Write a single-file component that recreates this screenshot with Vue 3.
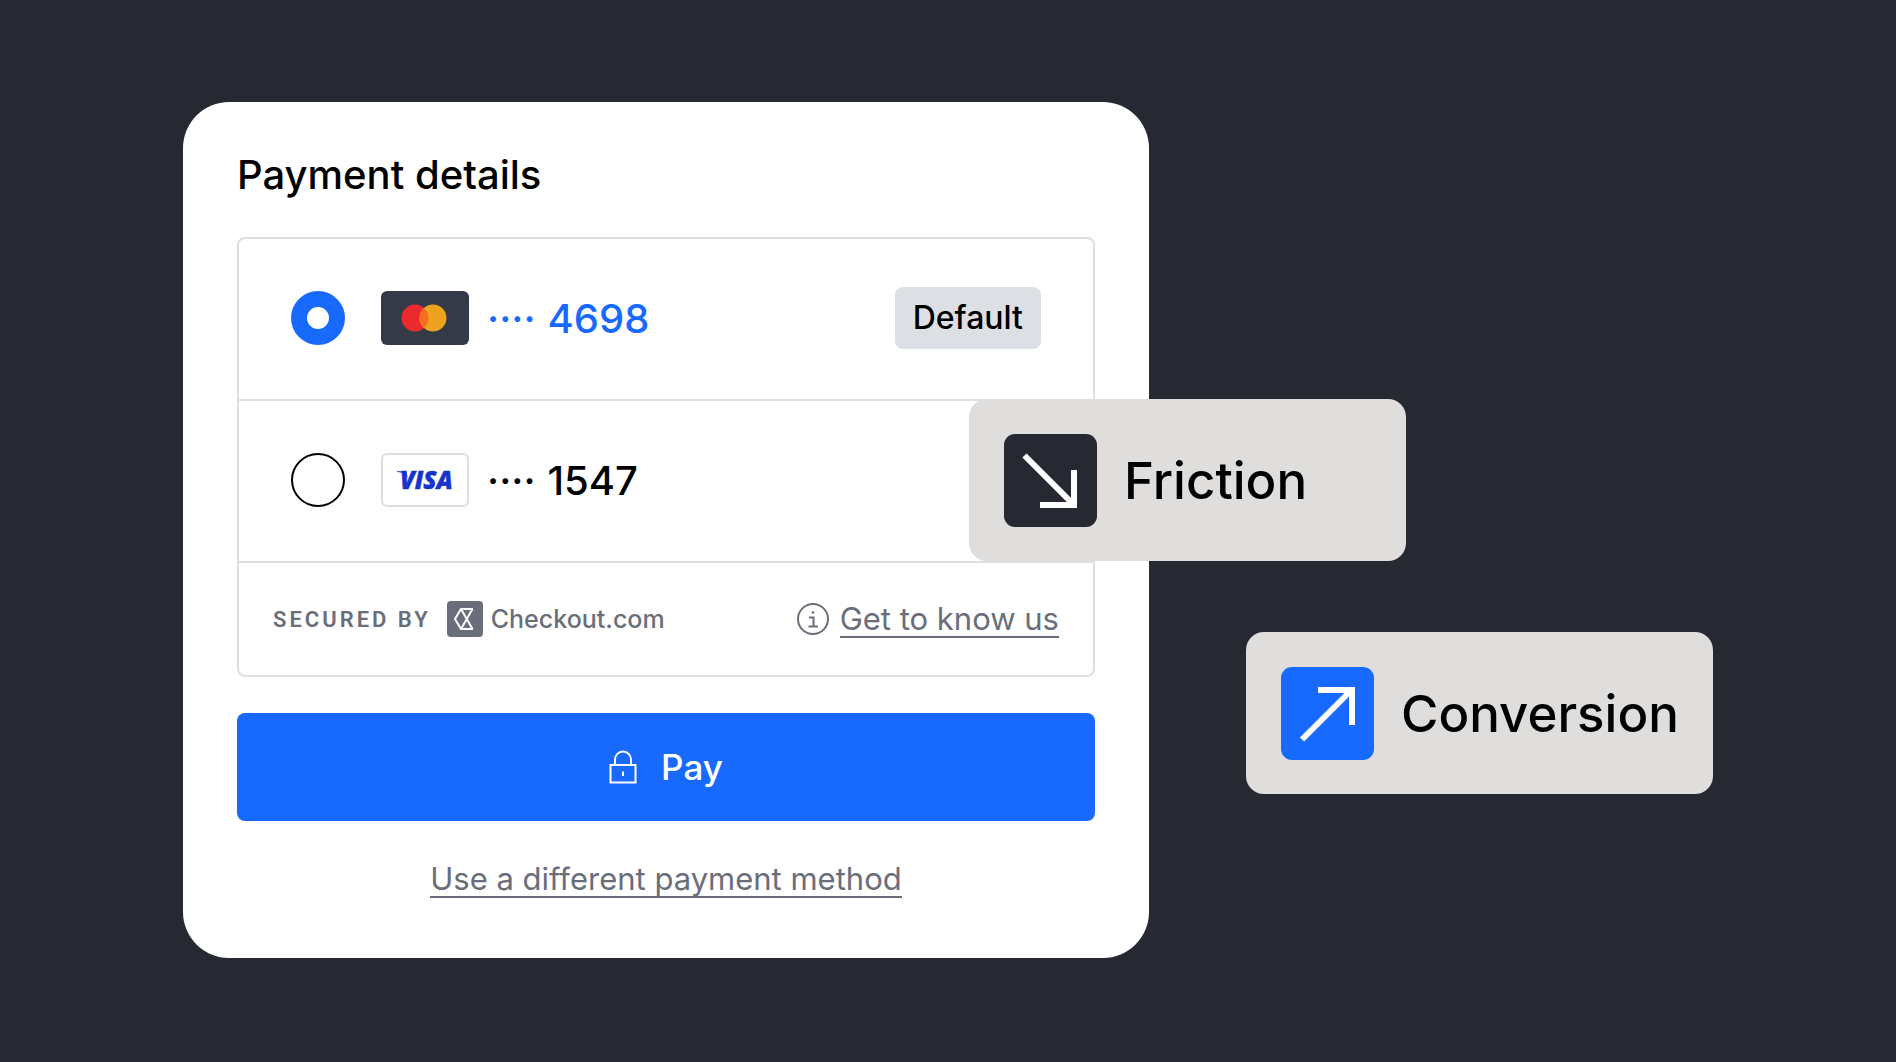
<script setup>
	import { ref } from 'vue';

	const selected = ref('4698');
	const cards = [
		{ last4: '4698', brand: 'mastercard', isDefault: true },
		{ last4: '1547', brand: 'visa', isDefault: false },
	];
</script>

<template>
	<main class="stage">
		<section class="card">
			<h1>Payment details</h1>

			<!-- saved cards -->
			<div class="methods">
				<label
					v-for="card in cards"
					:key="card.last4"
					class="method"
					:class="{ active: selected === card.last4 }"
				>
					<input type="radio" name="card" :value="card.last4" v-model="selected" />
					<svg v-if="card.brand === 'mastercard'" class="brand" viewBox="0 0 88 54">
						<rect width="88" height="54" rx="6" fill="#353a48" />
						<circle cx="34" cy="27" r="13.5" fill="#eb2a2e" />
						<circle cx="52" cy="27" r="13.5" fill="#eda31d" />
						<path d="M43 16.9a13.5 13.5 0 0 1 0 20.2a13.5 13.5 0 0 1 0-20.2z" fill="#f46f1f" />
					</svg>
					<svg v-else class="brand" viewBox="0 0 88 54">
						<rect x="1" y="1" width="86" height="52" rx="5" fill="#fff" stroke="#dcdfe4" stroke-width="2" />
						<text x="19" y="36" class="visa">VISA</text>
						<path d="M16 18.3h9l2 7c-2-4-5-5.800-11-6.200z" fill="#1434cb" />
					</svg>
					<span class="number"><span>····</span>{{ card.last4 }}</span>
					<span v-if="card.isDefault" class="default">Default</span>
				</label>

				<div class="secured">
					<span class="by">SECURED BY</span>
					<svg class="mark" viewBox="0 0 36 36">
						<rect width="36" height="36" rx="4" fill="#6a6e7a" />
						<path
							d="M26 8H14L8 18l6 10h12M14 8l11.5 20M25.5 8L14 28"
							fill="none"
							stroke="#fff"
							stroke-width="2"
						/>
					</svg>
					<span class="checkout">Checkout.com</span>
					<svg class="info" viewBox="0 0 32 32" fill="none" stroke="#6a6e7a" stroke-width="2">
						<circle cx="16" cy="16" r="15" />
						<path d="M12 14.5h4.5V23M11.5 23.5h9.5" />
						<circle cx="16" cy="9.5" r="1.3" fill="#6a6e7a" stroke="none" />
					</svg>
					<a href="#">Get to know us</a>
				</div>
			</div>

			<button class="pay" type="button">
				<svg viewBox="0 0 28 34" fill="none" stroke="#fff" stroke-width="2">
					<path d="M1.5 15h25v17.5h-25zM6 15V9.5a8 8 0 0 1 16 0V15M14 21.5v4.5" />
				</svg>
				Pay
			</button>

			<a class="other" href="#">Use a different payment method</a>

			<div class="tag friction">
				<svg viewBox="0 0 93 93">
					<rect width="93" height="93" rx="11" fill="#262932" />
					<path d="M20.5 21.5L68 69M36 71h34V36" fill="none" stroke="#fff" stroke-width="6" />
				</svg>
				Friction
			</div>
		</section>

		<div class="tag conversion">
			<svg viewBox="0 0 93 93">
				<rect width="93" height="93" rx="11" fill="#186aff" />
				<path d="M21 72.5L69 24.5M37 23h34v35" fill="none" stroke="#fff" stroke-width="6" />
			</svg>
			Conversion
		</div>
	</main>
</template>

<style>
	body {
		background-color: #262932;
	}
</style>

<style scoped>
	.stage {
		display: grid;
		grid-template-columns: 183fr 966fr 97fr minmax(0, 467fr) 183fr;
		align-items: start;
		box-sizing: border-box;
		min-height: 100vh;
		padding: 102px 0;
		background-color: #262932;
		font-family: Inter, sans-serif;
		color: #000;
	}

	.card {
		grid-column: 2;
		position: relative;
		box-sizing: border-box;
		display: flex;
		flex-direction: column;
		padding: 49px 54px 60px;
		border-radius: 46px;
		background-color: #fff;
	}

	h1 {
		margin: 0 0 38px;
		font-size: 40px;
		line-height: 48px;
		font-weight: 500;
	}

	.methods {
		border: 2px solid #dcdfe4;
		border-radius: 8px;
	}

	.method {
		box-sizing: border-box;
		display: flex;
		align-items: center;
		height: 162px;
		padding: 0 52px 2px;
		border-bottom: 2px solid #dcdfe4;
	}

	.method input {
		appearance: none;
		box-sizing: border-box;
		width: 54px;
		height: 54px;
		margin: 0 36px 0 0;
		border: 2px solid #000;
		border-radius: 50%;
	}

	.method input:checked {
		border: 16px solid #186aff;
	}

	.brand {
		width: 88px;
		height: 54px;
		margin-right: 18px;
	}

	.visa {
		font: italic 800 24px 'Open Sans', sans-serif;
		fill: #1434cb;
		stroke: #1434cb;
		stroke-width: 0.5;
	}

	.number {
		display: flex;
		align-items: center;
		gap: 12px;
		font-size: 40px;
		font-weight: 500;
	}

	.active .number {
		color: #186aff;
	}

	.default {
		margin-left: auto;
		padding: 0 18px;
		border-radius: 8px;
		background-color: #dcdfe4;
		font-size: 32px;
		line-height: 62px;
		font-weight: 500;
	}

	.secured {
		display: flex;
		align-items: center;
		height: 112px;
		padding: 0 34px;
		color: #6a6e7a;
	}

	.by {
		font-family: Roboto, sans-serif;
		font-size: 22px;
		font-weight: 600;
		letter-spacing: 3px;
	}

	.mark {
		width: 36px;
		height: 36px;
		margin: 0 8px 0 16px;
	}

	.checkout {
		font-size: 25px;
		font-weight: 500;
	}

	.info {
		width: 32px;
		height: 32px;
		margin: 0 11px 0 auto;
	}

	a {
		border-bottom: 2px solid #6a6e7a;
		color: #6a6e7a;
		font-size: 31px;
		line-height: 35px;
		text-decoration: none;
	}

	.pay {
		display: flex;
		align-items: center;
		justify-content: center;
		gap: 24px;
		height: 108px;
		margin: 36px 0 40px;
		border: 0;
		border-radius: 8px;
		background-color: #186aff;
		color: #fff;
		font-family: inherit;
		font-size: 35px;
		font-weight: 500;
	}

	.pay svg {
		width: 28px;
		height: 34px;
	}

	.other {
		align-self: center;
	}

	.tag {
		display: flex;
		align-items: center;
		gap: 27px;
		box-sizing: border-box;
		height: 162px;
		padding: 0 35px;
		border-radius: 18px;
		background-color: #dfdedc;
		font-size: 51px;
		font-weight: 500;
	}

	.tag svg {
		flex-shrink: 0;
		width: 93px;
		height: 93px;
	}

	/* sits over the right edge of the card */
	.friction {
		position: absolute;
		top: 297px;
		left: 786px;
		width: 437px;
	}

	.conversion {
		grid-column: 4;
		margin-top: 530px;
	}
</style>
